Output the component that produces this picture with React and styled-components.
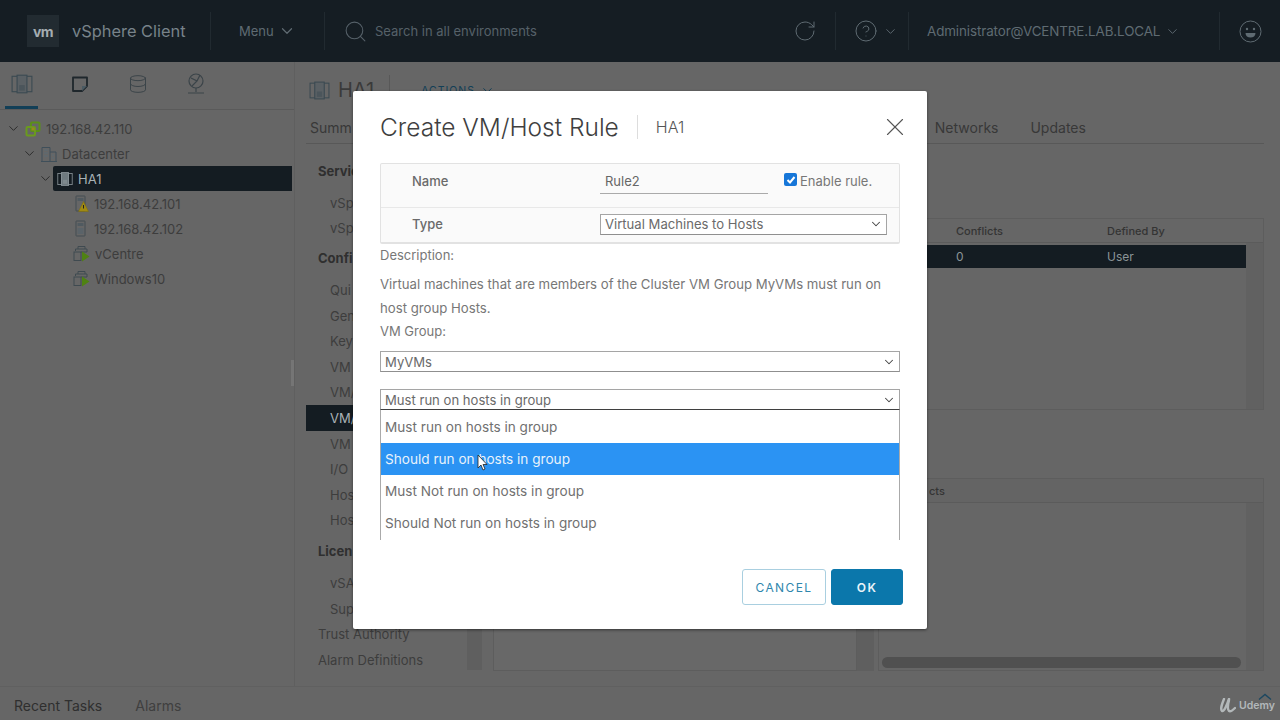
import styled, { createGlobalStyle } from "styled-components";
import { ChevronDown, RotateCw, CircleHelp, Search, X, Database } from "lucide-react";

const GlobalStyle = createGlobalStyle`
    html, body {
        margin: 0;
        padding: 0;
        background: #666;
        font-family: Inter, "Liberation Sans", sans-serif;
    }
    * {
        box-sizing: border-box;
    }
`;

const Page = styled.div`
    position: relative;
    width: 1280px;
    height: 720px;
    overflow: hidden;
    display: flex;
    flex-direction: column;
    background: #666;
`;

// HEADER
const Header = styled.header`
    height: 62px;
    flex: none;
    display: flex;
    align-items: center;
    background: #151d23;
    color: #5f6b72;
    padding-left: 27px;
`;

const Logo = styled.div`
    width: 32px;
    height: 32px;
    background: #222b31;
    color: #a5adb1;
    font-size: 14px;
    font-weight: 700;
    letter-spacing: -0.5px;
    display: flex;
    align-items: center;
    justify-content: center;
`;

const Brand = styled.div`
    width: 151px;
    padding-left: 13px;
    font-size: 16.4px;
    color: #78838a;
    white-space: nowrap;
`;

const HeaderDivider = styled.div`
    width: 1px;
    height: 38px;
    background: #212a30;
    flex: none;
`;

const MenuButton = styled.div`
    width: 113px;
    padding-left: 28px;
    display: flex;
    align-items: center;
    gap: 4px;
    font-size: 13px;
    white-space: nowrap;
`;

const SearchBox = styled.div`
    width: 450px;
    padding-left: 18px;
    display: flex;
    align-items: center;
    gap: 7px;
    font-size: 13px;
    color: #566169;
`;

const IconSlot = styled.div`
    width: ${p => p.$width}px;
    padding-left: ${p => p.$pad || 0}px;
    display: flex;
    align-items: center;
    justify-content: ${p => (p.$pad ? "flex-start" : "center")};
    gap: 5px;
    flex: none;
`;

const UserMenu = styled.div`
    width: 310px;
    padding-left: 18px;
    display: flex;
    align-items: center;
    gap: 5px;
    font-size: 13.4px;
    letter-spacing: -0.1px;
    white-space: nowrap;
`;

// BODY
const Body = styled.div`
    flex: 1;
    min-height: 0;
    display: flex;
`;

const Sidebar = styled.aside`
    position: relative;
    width: 295px;
    flex: none;
    border-right: 1px solid #5f5f5f;
`;

const SplitHandle = styled.div`
    position: absolute;
    right: 0;
    top: 298px;
    width: 3px;
    height: 26px;
    background: #757575;
`;

const SideTabs = styled.div`
    height: 48px;
    display: flex;
    border-bottom: 1px solid #5a5a5a;
    padding-left: 5px;
    gap: 25px;
`;

const SideTab = styled.div`
    width: 33px;
    height: 47px;
    display: flex;
    align-items: center;
    justify-content: center;
    color: #3b4449;
    border-bottom: 3px solid ${p => (p.$active ? "#123f57" : "transparent")};
`;

const Tree = styled.div`
    padding-top: 6px;
`;

const TreeRow = styled.div`
    height: 25px;
    display: flex;
    align-items: center;
    font-size: 13px;
    color: #3d3d3d;
    padding-left: ${p => p.$level * 16 + 6}px;
`;

const Chevron = styled.div`
    width: 15px;
    flex: none;
    display: flex;
    align-items: center;
    color: #2c2c2c;
`;

const TreeLabel = styled.div`
    flex: 1;
    height: 25px;
    display: flex;
    align-items: center;
    gap: 5px;
    padding-left: 4px;
    margin-right: 2px;
    border-radius: 2px 0 0 2px;
    white-space: nowrap;
    background: ${p => (p.$selected ? "#141c22" : "transparent")};
    color: ${p => (p.$selected ? "#a9b2b6" : "inherit")};
`;

const Main = styled.main`
    flex: 1;
    min-width: 0;
    padding: 0 16px 0 11px;
    display: flex;
    flex-direction: column;
`;

const TitleRow = styled.div`
    height: 56px;
    flex: none;
    display: flex;
    align-items: center;
    padding-left: 3px;
    gap: 8px;
`;

const ObjectName = styled.div`
    font-size: 20px;
    color: #3a3a3a;
    padding-right: 15px;
    border-right: 1px solid #585858;
    line-height: 30px;
`;

const Actions = styled.div`
    margin-left: 23px;
    display: flex;
    align-items: center;
    gap: 5px;
    font-size: 10.5px;
    letter-spacing: 1px;
    color: #123f57;
`;

const Tabs = styled.div`
    height: 26px;
    flex: none;
    display: flex;
    align-items: flex-start;
    padding: 1px 0 0 4px;
    gap: 32px;
    font-size: 14px;
    color: #383838;
    border-bottom: 1px solid #585858;
`;

const Tab = styled.div`
    margin-left: ${p => p.$offset || 0}px;
`;

const Content = styled.div`
    flex: 1;
    min-height: 0;
    display: flex;
`;

const Nav = styled.nav`
    width: 161px;
    flex: none;
    padding-top: 14px;
`;

const NavHeading = styled.div`
    height: 25px;
    padding-left: 12px;
    display: flex;
    align-items: center;
    margin-top: ${p => p.$gap}px;
    margin-bottom: 7px;
    font-size: 13px;
    font-weight: 700;
    color: #2f2f2f;
`;

const NavItem = styled.div`
    height: 25.6px;
    padding-left: ${p => (p.$top ? 12 : 24)}px;
    display: flex;
    align-items: center;
    font-size: 13px;
    white-space: nowrap;
    background: ${p => (p.$selected ? "#141c22" : "transparent")};
    color: ${p => (p.$selected ? "#a9b2b6" : "#3d3d3d")};
`;

const ScrollStrip = styled.div`
    width: 15px;
    flex: none;
    background: #5f5f5f;
    margin-bottom: 16px;
`;

const Detail = styled.div`
    flex: 1;
    min-width: 0;
    padding-top: 74px;
    padding-bottom: 15px;
    display: flex;
    flex-direction: column;
`;

const TablePanel = styled.div`
    position: relative;
    height: 192px;
    flex: none;
    border: 1px solid #5d5d5d;
    display: flex;
    flex-direction: column;
`;

const TableHead = styled.div`
    height: 24px;
    flex: none;
    display: flex;
    align-items: center;
    justify-content: flex-end;
    font-size: 11px;
    font-weight: 500;
    color: #343434;
    border-bottom: 1px solid #5b5b5b;
`;

const Cell = styled.div`
    width: ${p => p.$width}px;
    padding-left: 9px;
    flex: none;
`;

const TableRow = styled.div`
    height: 23px;
    margin: 2px 17px 0 0;
    display: flex;
    align-items: center;
    justify-content: flex-end;
    background: #141c22;
    font-size: 12px;
    color: #8b9498;
`;

const ScrollColumn = styled.div`
    position: absolute;
    right: 0;
    top: 24px;
    bottom: 0;
    width: 17px;
    background: #616161;
`;

const LowerPanels = styled.div`
    flex: 1;
    min-height: 0;
    margin-top: 68px;
    display: flex;
    gap: 4px;
`;

const LeftPanel = styled.div`
    width: 381px;
    margin-left: 11px;
    flex: none;
    display: flex;
`;

const PanelList = styled.div`
    flex: 1;
    border: 1px solid #5d5d5d;
    background: #686868;
`;

const PanelStrip = styled.div`
    width: 17px;
    background: #5f5f5f;
`;

const RightPanel = styled.div`
    flex: 1;
    min-width: 0;
    position: relative;
    border: 1px solid #5d5d5d;
    display: flex;
    flex-direction: column;
`;

const PanelHead = styled.div`
    height: 24px;
    flex: none;
    padding-left: 50px;
    display: flex;
    align-items: center;
    font-size: 11px;
    font-weight: 500;
    color: #343434;
    border-bottom: 1px solid #5b5b5b;
    background: #646464;
`;

const PanelBottomBar = styled.div`
    position: absolute;
    left: 3px;
    right: 22px;
    bottom: 2px;
    height: 11px;
    border-radius: 6px;
    background: #505050;
`;

// FOOTER
const Footer = styled.footer`
    height: 34px;
    flex: none;
    display: flex;
    align-items: center;
    padding: 4px 5px 0 14px;
    gap: 33px;
    border-top: 1px solid #606060;
    font-size: 14px;
`;

const FooterTab = styled.div`
    color: ${p => (p.$muted ? "#3f3f3f" : "#2f2f2f")};
`;

const Udemy = styled.div`
    position: relative;
    margin-left: auto;
    display: flex;
    align-items: center;
    gap: 3px;
    color: #b3b8ba;
    font-size: 10.5px;
    font-weight: 600;
`;

const UdemyCaret = styled.svg`
    position: absolute;
    right: 3px;
    top: -5px;
`;

// MODAL
const Modal = styled.div`
    position: absolute;
    left: 353px;
    top: 91px;
    width: 574px;
    height: 538px;
    background: #fff;
    padding: 0 24px 0 27px;
    border-radius: 2px;
    box-shadow: 0 1px 3px rgba(0, 0, 0, 0.5);
    display: flex;
    flex-direction: column;
`;

const ModalHead = styled.div`
    height: 72px;
    flex: none;
    display: flex;
    align-items: center;
`;

const ModalTitle = styled.h2`
    margin: 0;
    font-size: 24.5px;
    font-weight: 300;
    color: #3f3f3f;
    padding-right: 18px;
    white-space: nowrap;
`;

const ModalSub = styled.div`
    font-size: 16px;
    font-weight: 300;
    color: #555;
    border-left: 1px solid #ddd;
    padding-left: 18px;
    line-height: 24px;
`;

const CloseButton = styled.div`
    margin-left: auto;
    margin-right: -7px;
    display: flex;
    color: #555;
`;

const FormBox = styled.div`
    width: 520px;
    height: 81px;
    flex: none;
    background: #fafafa;
    border: 1px solid #e2e2e2;
    border-bottom-width: 2px;
    border-radius: 2px;
`;

const FormRow = styled.div`
    height: ${p => p.$height}px;
    display: flex;
    align-items: center;
    padding: 0 0 ${p => p.$lift}px 31px;
    border-top: ${p => (p.$divided ? "1px solid #e8e8e8" : "none")};
`;

const FormLabel = styled.div`
    width: 188px;
    flex: none;
    font-size: 13px;
    font-weight: 500;
    color: #6a6a6a;
`;

const NameInput = styled.div`
    width: 168px;
    height: 25px;
    flex: none;
    padding-left: 5px;
    display: flex;
    align-items: center;
    border-bottom: 1px solid #aaa;
    font-size: 13px;
    color: #666;
`;

const EnableRule = styled.label`
    margin-left: 16px;
    display: flex;
    align-items: center;
    gap: 3px;
    font-size: 13px;
    color: #777;
`;

const CheckBox = styled.span`
    width: 13px;
    height: 13px;
    border-radius: 2px;
    background: #1676d8;
    display: flex;
    align-items: center;
    justify-content: center;
    margin-top: -3px;
`;

const Select = styled.div`
    height: 21px;
    width: ${p => p.$width};
    flex: none;
    margin-top: ${p => p.$top || 0}px;
    padding: 0 3px 0 4px;
    display: flex;
    align-items: center;
    justify-content: space-between;
    border: 1px solid #a5a5a5;
    border-bottom-color: ${p => (p.$open ? "#3f3f3f" : "#8f8f8f")};
    background: #fff;
    font-size: 13.1px;
    color: #6a6a6a;

    svg {
        color: #444;
    }
`;

const BodyText = styled.div`
    font-size: ${p => p.$size || 13}px;
    color: #777;
    line-height: 24px;
    margin-top: ${p => p.$top || 0}px;
`;

const Dropdown = styled.div`
    width: 520px;
    flex: none;
    height: 130px;
    border-left: 1px solid #aaa;
    border-right: 1px solid #aaa;
    padding-top: 1px;
`;

const Option = styled.div`
    position: relative;
    height: 32px;
    padding-left: 4px;
    display: flex;
    align-items: center;
    font-size: 13.6px;
    color: ${p => (p.$active ? "#e8f2fb" : "#707070")};
    background: ${p => (p.$active ? "#2b93f3" : "#fff")};
`;

const Pointer = styled.svg`
    position: absolute;
    left: 96px;
    top: 11px;
`;

const ModalButtons = styled.div`
    margin-top: 29px;
    display: flex;
    justify-content: flex-end;
    gap: 5px;
`;

const Button = styled.div`
    width: ${p => p.$width}px;
    height: 36px;
    display: flex;
    align-items: center;
    justify-content: center;
    border-radius: 3px;
    font-size: 12px;
    font-weight: ${p => (p.$primary ? 600 : 400)};
    letter-spacing: 1.4px;
    color: ${p => (p.$primary ? "#eaf4f9" : "#2f86ad")};
    background: ${p => (p.$primary ? "#0b77ab" : "#fff")};
    border: 1px solid ${p => (p.$primary ? "#0b77ab" : "#a9cfe0")};
`;

// ICONS
const ClusterIcon = ({ size = 18, color = "#3b4a52", fill = "#5a6064" }) => (
    <svg width={size} height={size} viewBox="0 0 20 20" fill="none">
        <rect x="1" y="3" width="5" height="14" stroke={color} />
        <rect x="14" y="3" width="5" height="14" stroke={color} />
        <rect x="5.500" y="2" width="9" height="16" fill={fill} stroke={color} />
        <rect x="7.500" y="11" width="5" height="5" fill={color} opacity="0.5" />
    </svg>
);

const NoteIcon = () => (
    <svg width="18" height="18" viewBox="0 0 18 18" fill="none">
        <path d="M2 2.500h14v8.500l-5 5H2z" stroke="#1f272c" strokeWidth="1.8" strokeLinejoin="round" />
        <path d="M11 16v-5h5z" fill="#4a5a62" />
    </svg>
);

const NetworkIcon = () => (
    <svg width="20" height="22" viewBox="0 0 20 22" fill="none" stroke="#3b4449" strokeWidth="1.2">
        <circle cx="10" cy="8" r="7" />
        <path d="M5 5l6 3-5 5M11 8l3-6" />
        <path d="M10 15v4M2 20h16" />
    </svg>
);

const SmileIcon = () => (
    <svg width="23" height="23" viewBox="0 0 23 23" fill="none" stroke="currentColor">
        <circle cx="11.500" cy="11.500" r="10.500" />
        <circle cx="8" cy="9" r="1.200" fill="currentColor" stroke="none" />
        <circle cx="15" cy="9" r="1.200" fill="currentColor" stroke="none" />
        <path d="M6.500 13h10c0 3-2.200 4.500-5 4.500s-5-1.500-5-4.500z" fill="currentColor" stroke="none" />
    </svg>
);

const RootIcon = () => (
    <svg width="16" height="16" viewBox="0 0 16 16" fill="none">
        <rect x="6" y="1.500" width="8.500" height="8.500" rx="1" stroke="#5b8f18" strokeWidth="2" />
        <rect x="1.500" y="6" width="8.500" height="8.500" rx="1" stroke="#6a9a1e" strokeWidth="2" />
        <rect x="6.500" y="6.500" width="3" height="3" fill="#9a8a1c" />
    </svg>
);

const BuildingIcon = () => (
    <svg width="16" height="16" viewBox="0 0 16 16" fill="none" stroke="#3f4f5a">
        <path d="M1 15V1.500h8V15M9 6h6v9M0 15.500h16" />
        <path d="M3 4h4M3 7h4M3 10h4M11 9h2M11 12h2" stroke="#5a6a74" />
    </svg>
);

const HostIcon = ({ warn }) => (
    <svg width="16" height="18" viewBox="0 0 16 18" fill="none">
        <rect x="3" y="1" width="9" height="15" rx="0.5" stroke="#434c52" />
        <rect x="4.500" y="3" width="6" height="3" fill="#505a60" />
        {!warn && <rect x="4.500" y="8" width="6" height="6" fill="#5a6369" />}
        {warn && <path d="M10.500 6.500l5 10h-10z" fill="#a08a12" stroke="#7c6c0c" strokeWidth="0.5" />}
        {warn && <rect x="10" y="10" width="1" height="3.500" fill="#222" />}
    </svg>
);

const VmIcon = () => (
    <svg width="17" height="17" viewBox="0 0 17 17" fill="none">
        <path d="M5 4V1.500h7V4M8 7h6V4H2.500v2" stroke="#3f4a50" />
        <rect x="1" y="7" width="7" height="8.500" stroke="#3f4a50" />
        <path d="M9 6.500l7.500 5-7.500 5z" fill="#4f8212" />
    </svg>
);

const UdemyMark = () => (
    <svg width="17" height="15" viewBox="0 0 17 15" fill="none" stroke="#b3b8ba" strokeWidth="2.4" strokeLinecap="round">
        <path d="M5 1C3 6 1 11 3 13c2 1 5-6 7-12" />
        <path d="M10 2c-1 4-2 9 0 11 1.500 1 4-1 6-3" />
    </svg>
);

const tree = [
    { level: 0, chevron: true, icon: <RootIcon />, label: "192.168.42.110" },
    { level: 1, chevron: true, icon: <BuildingIcon />, label: "Datacenter" },
    { level: 2, chevron: true, icon: <ClusterIcon size={16} color="#8d979c" fill="#6f7a80" />, label: "HA1", selected: true },
    { level: 3, icon: <HostIcon warn />, label: "192.168.42.101" },
    { level: 3, icon: <HostIcon />, label: "192.168.42.102" },
    { level: 3, icon: <VmIcon />, label: "vCentre" },
    { level: 3, icon: <VmIcon />, label: "Windows10" },
];

// the modal covers the rest of these labels
const configItems = ["Qui", "Gen", "Key", "VM", "VM/", "VM/", "VM", "I/O", "Hos", "Hos"];

const ruleOptions = ["Must run on hosts in group", "Should run on hosts in group", "Must Not run on hosts in group", "Should Not run on hosts in group"];

const App = () => {
    return (
        <Page>
            <GlobalStyle />
            <Header>
                <Logo>vm</Logo>
                <Brand>vSphere Client</Brand>
                <HeaderDivider />
                <MenuButton>Menu <ChevronDown size={18} strokeWidth={1.6} /></MenuButton>
                <HeaderDivider />
                <SearchBox>
                    <Search size={25} strokeWidth={1} />
                    Search in all environments
                </SearchBox>
                <IconSlot $width={60}><RotateCw size={24} strokeWidth={1} /></IconSlot>
                <HeaderDivider />
                <IconSlot $width={72} $pad={18}>
                    <CircleHelp size={24} strokeWidth={1} />
                    <ChevronDown size={15} strokeWidth={1.5} />
                </IconSlot>
                <HeaderDivider />
                <UserMenu>
                    Administrator@VCENTRE.LAB.LOCAL
                    <ChevronDown size={15} strokeWidth={1.5} />
                </UserMenu>
                <HeaderDivider />
                <IconSlot $width={60}><SmileIcon /></IconSlot>
            </Header>
            <Body>
                <Sidebar>
                    <SideTabs>
                        <SideTab $active><ClusterIcon size={22} /></SideTab>
                        <SideTab><NoteIcon /></SideTab>
                        <SideTab><Database size={20} strokeWidth={1.2} /></SideTab>
                        <SideTab><NetworkIcon /></SideTab>
                    </SideTabs>
                    <Tree>
                        {tree.map(item => (
                            <TreeRow key={item.label} $level={item.level}>
                                <Chevron>{item.chevron && <ChevronDown size={15} strokeWidth={1.6} />}</Chevron>
                                <TreeLabel $selected={item.selected}>{item.icon}{item.label}</TreeLabel>
                            </TreeRow>
                        ))}
                    </Tree>
                    <SplitHandle />
                </Sidebar>
                <Main>
                    <TitleRow>
                        <ClusterIcon size={21} />
                        <ObjectName>HA1</ObjectName>
                        <Actions>ACTIONS <ChevronDown size={15} strokeWidth={1.6} /></Actions>
                    </TitleRow>
                    <Tabs>
                        <Tab>Summ</Tab>
                        <Tab $offset={551}>Networks</Tab>
                        <Tab>Updates</Tab>
                    </Tabs>
                    <Content>
                        <Nav>
                            <NavHeading $gap={0}>Servic</NavHeading>
                            <NavItem>vSp</NavItem>
                            <NavItem>vSp</NavItem>
                            <NavHeading $gap={4}>Confi</NavHeading>
                            {configItems.map((item, i) => (
                                <NavItem key={i} $selected={i === 5}>{item}</NavItem>
                            ))}
                            <NavHeading $gap={5}>Licen</NavHeading>
                            <NavItem>vSA</NavItem>
                            <NavItem>Sup</NavItem>
                            <NavItem $top>Trust Authority</NavItem>
                            <NavItem $top>Alarm Definitions</NavItem>
                        </Nav>
                        <ScrollStrip />
                        <Detail>
                            <TablePanel>
                                <TableHead>
                                    <Cell $width={151}>Conflicts</Cell>
                                    <Cell $width={165}>Defined By</Cell>
                                </TableHead>
                                <TableRow>
                                    <Cell $width={151}>0</Cell>
                                    <Cell $width={148}>User</Cell>
                                </TableRow>
                                <ScrollColumn />
                            </TablePanel>
                            <LowerPanels>
                                <LeftPanel>
                                    <PanelList />
                                    <PanelStrip />
                                </LeftPanel>
                                <RightPanel>
                                    <PanelHead>cts</PanelHead>
                                    <ScrollColumn />
                                    <PanelBottomBar />
                                </RightPanel>
                            </LowerPanels>
                        </Detail>
                    </Content>
                </Main>
            </Body>
            <Footer>
                <FooterTab>Recent Tasks</FooterTab>
                <FooterTab $muted>Alarms</FooterTab>
                <Udemy>
                    <UdemyMark />
                    Udemy
                    <UdemyCaret width="14" height="7" viewBox="0 0 14 7" fill="none" stroke="#1d4860" strokeWidth="1.4">
                        <path d="M1 6.500l6-5 6 5" />
                    </UdemyCaret>
                </Udemy>
            </Footer>
            <Modal>
                <ModalHead>
                    <ModalTitle>Create VM/Host Rule</ModalTitle>
                    <ModalSub>HA1</ModalSub>
                    <CloseButton><X size={30} strokeWidth={0.9} /></CloseButton>
                </ModalHead>
                <FormBox>
                    <FormRow $height={43} $lift={9}>
                        <FormLabel>Name</FormLabel>
                        <NameInput>Rule2</NameInput>
                        <EnableRule>
                            <CheckBox>
                                <svg width="10" height="10" viewBox="0 0 10 10" fill="none" stroke="#fff" strokeWidth="2">
                                    <path d="M1.500 5l2.500 2.500L8.500 2" />
                                </svg>
                            </CheckBox>
                            Enable rule.
                        </EnableRule>
                    </FormRow>
                    <FormRow $height={35} $lift={2} $divided>
                        <FormLabel>Type</FormLabel>
                        <Select $width="287px">
                            Virtual Machines to Hosts
                            <ChevronDown size={14} strokeWidth={1.8} />
                        </Select>
                    </FormRow>
                </FormBox>
                <BodyText $top={-1}>Description:</BodyText>
                <BodyText $top={5} $size={13.2}>
                    Virtual machines that are members of the Cluster VM Group MyVMs must run on<br />
                    host group Hosts.
                </BodyText>
                <BodyText $top={-1}>VM Group:</BodyText>
                <Select $width="520px" $top={8}>
                    MyVMs
                    <ChevronDown size={14} strokeWidth={1.8} />
                </Select>
                <Select $width="520px" $top={17} $open>
                    Must run on hosts in group
                    <ChevronDown size={14} strokeWidth={1.8} />
                </Select>
                <Dropdown>
                    {ruleOptions.map((option, i) => (
                        <Option key={option} $active={i === 1}>
                            {option}
                            {i === 1 && (
                                <Pointer width="11" height="17" viewBox="0 0 11 17">
                                    <path d="M1 1v13l3-3 2 5 2-1-2-4.500h4z" fill="#fff" stroke="#222" strokeWidth="0.8" />
                                </Pointer>
                            )}
                        </Option>
                    ))}
                </Dropdown>
                <ModalButtons>
                    <Button $width={84}>CANCEL</Button>
                    <Button $width={72} $primary>OK</Button>
                </ModalButtons>
            </Modal>
        </Page>
    );
};

export default App;
